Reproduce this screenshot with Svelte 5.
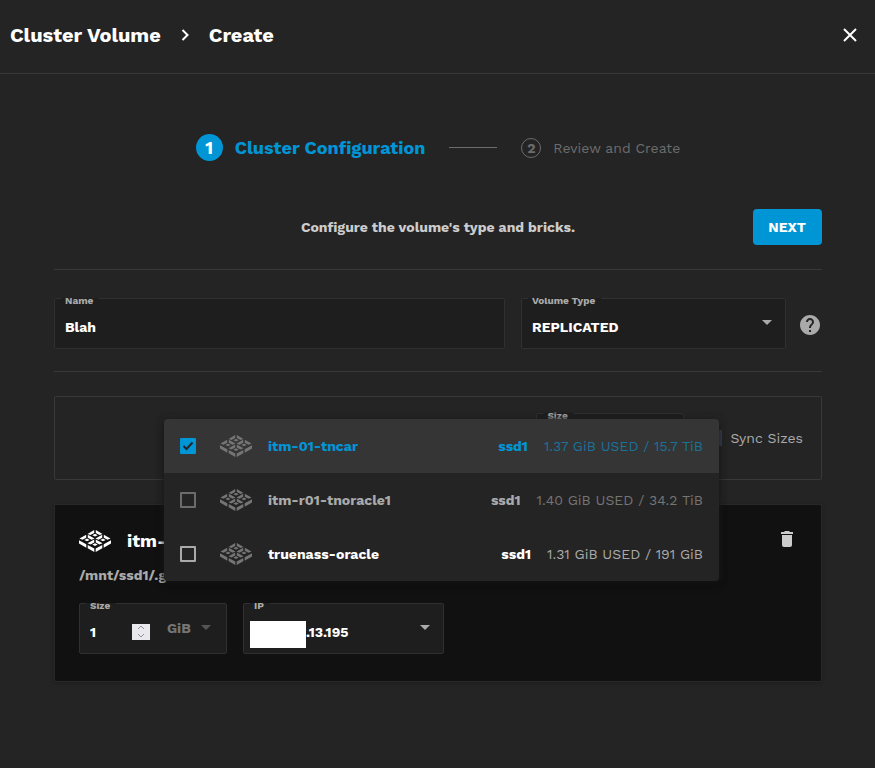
<script lang="ts">
    interface Peer {
        hostname: string;
        volume: string;
        usage: string;
        state: 'selected' | 'unavailable' | 'available';
    }

    let name = $state('Blah');
    let volumeType = $state('REPLICATED');
    let brickSize = $state(1);
    let syncSize = $state(1);
    let syncSizes = $state(true);

    const peers: Peer[] = [
        { hostname: 'itm-01-tncar', volume: 'ssd1', usage: '1.37 GiB USED / 15.7 TiB', state: 'selected' },
        { hostname: 'itm-r01-tnoracle1', volume: 'ssd1', usage: '1.40 GiB USED / 34.2 TiB', state: 'unavailable' },
        { hostname: 'truenass-oracle', volume: 'ssd1', usage: '1.31 GiB USED / 191 GiB', state: 'available' }
    ];

    // centres of the four tiles in the logo
    const tiles = [[16, 5.2], [8, 9.9], [24, 9.9], [16, 14.6]];
</script>

{#snippet logo()}
    <svg class="logo" viewBox="0 0 32 22" aria-hidden="true">
        {#each tiles as [x, y]}
            <g transform="translate({x} {y})">
                <path d="M-.8-5.200v3.100L-4.500-.1-7.500-1.300zM.8-5.200v3.100L4.500-.1 7.500-1.300z" />
                <path d="M0-1.400 2.700 0 0 1.400-2.700 0z" />
            </g>
        {/each}
        <path d="M0 10.200l7.300 4.100v3.500L0 13.600zM32 10.200l-7.300 4.100v3.500l7.300-4.200z" />
        <path d="M8.700 14.900l6.600 3.700V22l-6.600-3.700zM23.300 14.900l-6.600 3.700V22l6.600-3.700z" />
    </svg>
{/snippet}

{#snippet caret()}
    <svg class="caret" viewBox="0 0 10 5" aria-hidden="true"><path d="M0 0h10L5 5z" /></svg>
{/snippet}

<div class="page">
    <header>
        <nav>
            <a href="#volumes">Cluster Volume</a>
            <svg class="chevron" viewBox="0 0 8 12" aria-hidden="true"><path d="M1.500 1l5 5-5 5" /></svg>
            <span>Create</span>
        </nav>
        <button class="close" aria-label="Close">
            <svg viewBox="0 0 14 14"><path d="M1 1l12 12M13 1L1 13" /></svg>
        </button>
    </header>

    <main>
        <ol class="stepper">
            <li class="step active"><span class="number">1</span>Cluster Configuration</li>
            <li class="line" aria-hidden="true"></li>
            <li class="step"><span class="number">2</span>Review and Create</li>
        </ol>

        <div class="actions">
            <p>Configure the volume's type and bricks.</p>
            <button class="next">NEXT</button>
        </div>

        <div class="settings">
            <div class="field">
                <label for="name">Name</label>
                <input id="name" type="text" bind:value={name} />
            </div>
            <div class="field">
                <label for="type">Volume Type</label>
                <select id="type" bind:value={volumeType}>
                    <option>REPLICATED</option>
                    <option>DISPERSED</option>
                </select>
                {@render caret()}
            </div>
            <button class="help" aria-label="Help">
                <svg viewBox="2 2 20 20"><path d="M12 2C6.48 2 2 6.48 2 12s4.48 10 10 10 10-4.48 10-10S17.52 2 12 2zm1 17h-2v-2h2v2zm2.07-7.75l-.9.92C13.45 12.9 13 13.5 13 15h-2v-.5c0-1.1.45-2.1 1.17-2.83l1.24-1.26c.37-.36.59-.86.59-1.41 0-1.1-.9-2-2-2s-2 .9-2 2H8c0-2.21 1.79-4 4-4s4 1.79 4 4c0 .88-.36 1.68-.93 2.25z" /></svg>
            </button>
        </div>

        <section class="sync">
            <div class="field size">
                <label for="sync-size">Size</label>
                <input id="sync-size" type="number" bind:value={syncSize} />
            </div>
            <label class="sync-toggle">
                <input type="checkbox" bind:checked={syncSizes} />
                Sync Sizes
            </label>

            <div class="menu">
                {#each peers as peer}
                    <label class="peer {peer.state}">
                        <input type="checkbox" checked={peer.state === 'selected'} disabled={peer.state === 'unavailable'} />
                        <svg class="tick" viewBox="0 0 16 16" aria-hidden="true"><path d="M3.500 8l3 3 6-6.500" /></svg>
                        {@render logo()}
                        <span class="hostname">{peer.hostname}</span>
                        <span class="volume">{peer.volume}</span>
                        <span class="usage">{peer.usage}</span>
                    </label>
                {/each}
            </div>
        </section>

        <section class="brick">
            <div class="brick-header">
                {@render logo()}
                <h2>itm-01-tncar</h2>
                <button class="delete" aria-label="Remove brick">
                    <svg viewBox="0 0 12 16"><path d="M4 0h4l1 1h3v2H0V1h3zM1 4h10v10a2 2 0 0 1-2 2H3a2 2 0 0 1-2-2z" /></svg>
                </button>
            </div>
            <p class="path">/mnt/ssd1/.glusterfs</p>
            <div class="brick-fields">
                <div class="field size">
                    <label for="size">Size</label>
                    <input id="size" type="number" bind:value={brickSize} />
                    <div class="spinner">
                        <button aria-label="Increase" onclick={() => brickSize++}>
                            <svg viewBox="0 0 8 5"><path d="M1 4l3-3 3 3" /></svg>
                        </button>
                        <button aria-label="Decrease" onclick={() => brickSize--}>
                            <svg viewBox="0 0 8 5"><path d="M1 1l3 3 3-3" /></svg>
                        </button>
                    </div>
                    <select class="unit" aria-label="Unit" disabled>
                        <option>GiB</option>
                    </select>
                    {@render caret()}
                </div>
                <div class="field ip">
                    <label for="ip">IP</label>
                    <span class="mask"></span>
                    <select id="ip">
                        <option>.13.195</option>
                    </select>
                    {@render caret()}
                </div>
            </div>
        </section>
    </main>
</div>

<style>
    :global(body) {
        background: #242424;
    }

    .page {
        min-height: 100vh;
        background: #242424;
        color: #fff;
        font-family: 'Work Sans', Inter, 'Open Sans', sans-serif;
        font-size: 14px;
        line-height: 20px;
    }

    .page * {
        box-sizing: border-box;
    }

    button,
    input,
    select {
        margin: 0;
        padding: 0;
        border: 0;
        background: none;
        color: inherit;
        font: inherit;
    }

    button {
        display: flex;
        align-items: center;
        justify-content: center;
        cursor: pointer;
    }

    header {
        display: flex;
        align-items: center;
        justify-content: space-between;
        height: 74px;
        padding: 0 16px 4px 10px;
        border-bottom: 1px solid #383838;
    }

    nav {
        display: flex;
        align-items: center;
        gap: 20px;
        font-size: 20px;
        line-height: 24px;
        font-weight: 700;
    }

    nav a {
        color: inherit;
        text-decoration: none;
    }

    .chevron {
        width: 8px;
        height: 12px;
        fill: none;
        stroke: #fff;
        stroke-width: 2;
    }

    .close {
        width: 18px;
        height: 18px;
    }

    .close svg {
        width: 14px;
        height: 14px;
        stroke: #fff;
        stroke-width: 2;
    }

    main {
        padding: 60px 53px 86px 54px;
    }

    .stepper {
        display: flex;
        align-items: center;
        justify-content: center;
        gap: 24px;
        margin: 0;
        padding: 0;
        list-style: none;
    }

    .step {
        display: flex;
        align-items: center;
        gap: 12px;
        color: #6c6c6c;
    }

    .number {
        display: flex;
        align-items: center;
        justify-content: center;
        width: 20px;
        height: 20px;
        border: 1px solid #6c6c6c;
        border-radius: 50%;
        font-weight: 700;
    }

    .step.active {
        color: #0095d5;
        font-size: 18px;
        font-weight: 700;
    }

    .active .number {
        width: 27px;
        height: 27px;
        border: 0;
        background: #0095d5;
        color: #fff;
    }

    .line {
        width: 48px;
        height: 1px;
        background: #6c6c6c;
    }

    .actions {
        display: grid;
        grid-template-columns: 1fr auto 1fr;
        align-items: center;
        margin-top: 48px;
        padding-bottom: 24px;
        border-bottom: 1px solid #383838;
    }

    .actions p {
        grid-column: 2;
        margin: 0;
        color: #ccc;
        font-weight: 700;
    }

    .next {
        justify-self: end;
        height: 36px;
        padding: 0 16px 0 15px;
        border-radius: 4px;
        background: #0095d5;
        font-weight: 700;
    }

    .settings {
        display: grid;
        grid-template-columns: 451fr 265fr 20px;
        align-items: center;
        gap: 16px;
        padding: 28px 0 22px;
        border-bottom: 1px solid #383838;
    }

    .field {
        position: relative;
        display: flex;
        align-items: center;
        height: 51px;
        padding: 6px 13px 0 10px;
        border: 1px solid #303030;
        border-radius: 2px;
        background: #1e1e1e;
        font-weight: 700;
    }

    /* the top of the label is cut off by the outline */
    .field > label {
        position: absolute;
        top: -1px;
        left: 6px;
        padding: 0 6px 0 4px;
        background: #1e1e1e;
        color: #aaa;
        font-size: 10px;
        line-height: 6px;
        clip-path: inset(0 0 -6px 0);
    }

    .field input,
    .field select {
        flex: 1;
        width: 0;
        min-width: 0;
        appearance: none;
    }

    .field input[type='number'] {
        appearance: textfield;
    }

    .field input:focus,
    .field select:focus {
        outline: none;
    }

    .caret {
        width: 10px;
        height: 5px;
        margin-bottom: 8px;
        fill: #aaa;
    }

    .help {
        width: 20px;
        height: 20px;
        margin: 2px 0 0 -2px;
    }

    .help svg {
        width: 20px;
        height: 20px;
        fill: #aaa;
    }

    .sync {
        position: relative;
        display: flex;
        align-items: center;
        justify-content: flex-end;
        gap: 22px;
        height: 84px;
        margin-top: 24px;
        padding: 0 18px;
        border: 1px solid #383838;
        border-radius: 2px;
    }

    .size {
        width: 148px;
    }

    .sync-toggle {
        display: flex;
        align-items: center;
        gap: 8px;
        color: #aaa;
    }

    .sync-toggle input {
        width: 16px;
        height: 16px;
        appearance: none;
        background: #39455a;
    }

    /* brick selection list, opens over the sections below it */
    .menu {
        position: absolute;
        z-index: 1;
        top: 22px;
        left: 109px;
        right: 102px;
        overflow: hidden;
        border-radius: 4px;
        background: #242424;
        box-shadow: 0 3px 10px rgba(0, 0, 0, 0.4), 0 0 6px #242424;
    }

    .peer {
        position: relative;
        display: flex;
        align-items: center;
        height: 54px;
        padding: 0 16px;
        color: #aaa;
    }

    .peer input {
        width: 16px;
        height: 16px;
        border: 2px solid #aaa;
        border-radius: 1px;
        appearance: none;
    }

    .peer input:disabled {
        border-color: #6c6c6c;
    }

    .peer input:checked {
        border-color: #0095d5;
        background: #0095d5;
    }

    .tick {
        position: absolute;
        left: 16px;
        width: 16px;
        height: 16px;
        fill: none;
        stroke: #242424;
        stroke-width: 2;
        visibility: hidden;
    }

    .peer input:checked + .tick {
        visibility: visible;
    }

    .logo {
        width: 32px;
        height: 22px;
        fill: #fff;
    }

    .peer .logo {
        margin: 0 16px 0 24px;
        fill: #757575;
    }

    .hostname {
        flex: 1;
        font-weight: 700;
    }

    .volume {
        margin-right: 16px;
        font-weight: 700;
    }

    .selected {
        background: #353535;
        color: #0095d5;
    }

    .selected .usage {
        color: #1a7299;
    }

    .unavailable .usage {
        color: #757575;
    }

    .available .hostname,
    .available .volume {
        color: #fff;
    }

    .brick {
        margin-top: 24px;
        padding: 24px 24px 27px;
        border: 1px solid #282828;
        background: #111;
        box-shadow: 0 1px 4px rgba(0, 0, 0, 0.2);
    }

    .brick-header {
        display: flex;
        align-items: center;
        gap: 16px;
        height: 24px;
    }

    h2 {
        flex: 1;
        margin: 0;
        font-size: 18px;
        line-height: 24px;
        font-weight: 700;
    }

    .delete {
        width: 20px;
        height: 20px;
        margin-bottom: 4px;
    }

    .delete svg {
        width: 12px;
        height: 16px;
        fill: #ccc;
    }

    .path {
        margin: 12px 0 18px;
        color: #aaa;
        font-weight: 700;
    }

    .brick-fields {
        display: flex;
        gap: 16px;
    }

    .spinner {
        display: flex;
        flex-direction: column;
        width: 18px;
        height: 16px;
        background: #e9e9ed;
    }

    .spinner button {
        height: 8px;
    }

    .spinner svg {
        width: 8px;
        height: 5px;
        fill: none;
        stroke: #8f8f9d;
    }

    .size .unit {
        flex: none;
        width: 34px;
        margin: 0 0 8px 17px;
        color: #757575;
        opacity: 1;
    }

    .unit + .caret {
        margin-right: 2px;
        fill: #555;
    }

    .ip {
        width: 201px;
        padding-left: 6px;
    }

    .mask {
        width: 56px;
        height: 27px;
        margin-top: 6px;
        background: #fff;
    }
</style>
